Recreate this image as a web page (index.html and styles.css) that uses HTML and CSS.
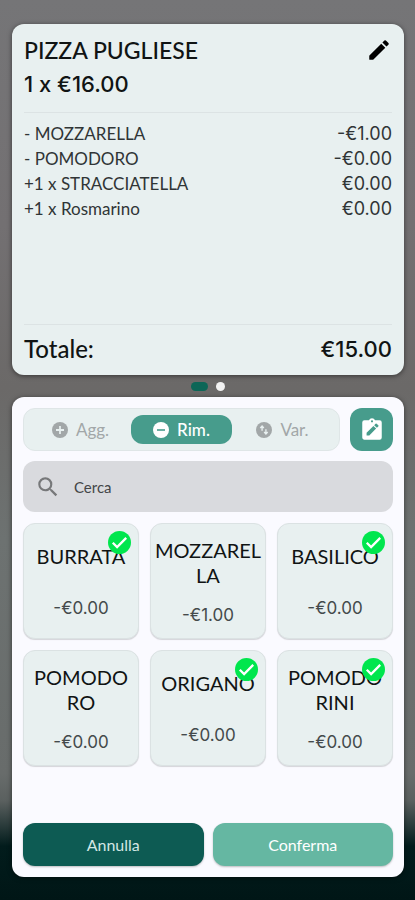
FILE: index.html
```html
<!DOCTYPE html>
<html lang="it">
<head>
<meta charset="utf-8">
<meta name="viewport" content="width=device-width, initial-scale=1">
<title>Pizza Pugliese</title>
<link rel="stylesheet" href="styles.css">
</head>
<body>
<svg class="defs" aria-hidden="true">
  <symbol id="check" viewBox="0 0 24 24"><circle cx="12" cy="12" r="12" fill="#00e64d"/><path d="M5 12.200l4.500 4.500L19 7.200" fill="none" stroke="#fff" stroke-width="2.4"/></symbol>
</svg>
<main class="screen">
  <section class="card order">
    <header class="order-head">
      <div>
        <h1 class="title">PIZZA PUGLIESE</h1>
        <p class="title amount">1 x €16.00</p>
      </div>
      <button class="edit" aria-label="Modifica"><svg viewBox="0 0 24 24" width="26" height="26"><path d="M3 17.46v3.04c0 .28.22.5.5.5h3.04c.13 0 .26-.05.35-.15L17.81 9.94l-3.75-3.75L3.15 17.1c-.1.1-.15.22-.15.36zM20.71 7.04a1 1 0 0 0 0-1.41l-2.34-2.34a1 1 0 0 0-1.41 0l-1.83 1.83 3.75 3.75 1.83-1.83z"/></svg></button>
    </header>
    <ul class="lines">
      <li><span>- MOZZARELLA</span><span class="num">-€1.00</span></li>
      <li><span>- POMODORO</span><span class="num">-€0.00</span></li>
      <li><span>+1 x STRACCIATELLA</span><span class="num">€0.00</span></li>
      <li><span>+1 x Rosmarino</span><span class="num">€0.00</span></li>
    </ul>
    <footer class="total"><span>Totale:</span><span class="amount">€15.00</span></footer>
  </section>
  <div class="dots"><span class="dot active"></span><span class="dot"></span></div>
  <section class="card picker">
    <div class="toolbar">
      <div class="tabs">
        <button class="tab"><svg viewBox="0 0 20 20" width="16" height="16"><circle cx="10" cy="10" r="10" fill="currentColor"/><path d="M10 5v10M5 10h10" stroke="#e8f0f0" stroke-width="2.2"/></svg>Agg.</button>
        <button class="tab selected"><svg viewBox="0 0 20 20" width="16" height="16"><circle cx="10" cy="10" r="10" fill="currentColor"/><path d="M5 10h10" stroke="#479c8c" stroke-width="2"/></svg>Rim.</button>
        <button class="tab"><svg viewBox="0 0 20 20" width="16" height="16"><circle cx="10" cy="10" r="10" fill="currentColor"/><path d="M7.6 11V5M5.4 7.4l2.2-2.4 2.2 2.4M12.4 9v6M10.2 12.6l2.2 2.4 2.2-2.4" fill="none" stroke="#e8f0f0" stroke-width="1.7"/></svg>Var.</button>
      </div>
      <button class="note" aria-label="Nota"><svg viewBox="0 0 24 24" width="26" height="26"><path fill="#fff" d="M19 3h-4.2a3 3 0 0 0-5.6 0H5a2 2 0 0 0-2 2v14c0 1.100.9 2 2 2h14a2 2 0 0 0 2-2V5a2 2 0 0 0-2-2z"/><circle cx="12" cy="4" r="1" fill="#479c8c"/><path fill="#479c8c" d="M7 17v-2.500l6.300-6.300 2.500 2.500L9.500 17zM16.500 10l-2.500-2.500 1.300-1.300a.7.7 0 0 1 1 0l1.500 1.500a.7.7 0 0 1 0 1z"/></svg></button>
    </div>
    <label class="search">
      <svg viewBox="0 0 24 24" width="26" height="26"><path fill="#77787a" d="M15.500 14h-.79l-.28-.27A6.470 6.470 0 0 0 16 9.500 6.500 6.500 0 1 0 9.500 16c1.610 0 3.090-.59 4.230-1.570l.27.28v.79l5 4.990L20.490 19l-4.990-5zm-6 0C7.010 14 5 11.990 5 9.500S7.010 5 9.500 5 14 7.010 14 9.500 11.990 14 9.500 14z"/></svg>
      <input type="text" placeholder="Cerca" aria-label="Cerca">
    </label>
    <div class="grid">
      <button class="tile"><span class="name">BURRATA</span><span class="price">-€0.00</span><svg class="check"><use href="#check"/></svg></button>
      <button class="tile"><span class="name">MOZZAREL<br>LA</span><span class="price">-€1.00</span></button>
      <button class="tile"><span class="name">BASILICO</span><span class="price">-€0.00</span><svg class="check"><use href="#check"/></svg></button>
      <button class="tile"><span class="name">POMODO<br>RO</span><span class="price">-€0.00</span></button>
      <button class="tile"><span class="name">ORIGANO</span><span class="price">-€0.00</span><svg class="check"><use href="#check"/></svg></button>
      <button class="tile"><span class="name">POMODO<br>RINI</span><span class="price">-€0.00</span><svg class="check"><use href="#check"/></svg></button>
    </div>
    <div class="actions">
      <button class="action cancel">Annulla</button>
      <button class="action confirm">Conferma</button>
    </div>
  </section>
</main>
</body>
</html>
```
FILE: styles.css
```css
* { box-sizing: border-box; }
body {
  margin: 0;
  min-height: 100vh;
  font-family: Lato, "Liberation Sans", sans-serif;
  color: #101414;
  background: linear-gradient(#757577 0%, #737072 25%, #6b6968 43%, #6d7271 60%, #686c6b 86%, #5a605f 89%, #021c1c 94%, #001616 100%);
}
button {
  margin: 0;
  padding: 0;
  border: 0;
  font: inherit;
  color: inherit;
  background: none;
  cursor: pointer;
}
svg { display: block; }
.defs { position: absolute; width: 0; height: 0; }
.screen {
  display: flex;
  flex-direction: column;
  min-height: 100vh;
  padding: 24px 11px 23px 12px;
}
.card {
  padding: 11px 12px;
  border-radius: 12px;
  box-shadow: 0 1px 5px rgba(0, 0, 0, .5);
}
.order {
  display: flex;
  flex-direction: column;
  min-height: 351px;
  padding-bottom: 0;
  background: #e8f0f0;
}
.order-head {
  display: flex;
  justify-content: space-between;
  align-items: flex-start;
  height: 78px;
  border-bottom: 1px solid #dce3e4;
}
.title {
  margin: 0 0 4px;
  font-size: 23px;
  line-height: 30px;
  font-weight: 500;
}
.amount { font-family: Inter, sans-serif; font-size: 22px; }
.edit { margin-top: 2px; }
.lines {
  flex: 1;
  margin: 0;
  padding: 8px 0 0;
  list-style: none;
  font-size: 17px;
  line-height: 25px;
  color: #303536;
}
.lines li { display: flex; justify-content: space-between; }
.num { font-family: Inter, sans-serif; font-size: 18px; }
.total {
  display: flex;
  justify-content: space-between;
  align-items: center;
  height: 51px;
  padding-bottom: 3px;
  border-top: 1px solid #dce3e4;
  font-size: 24px;
  font-weight: 500;
}
.dots {
  display: flex;
  justify-content: center;
  align-items: center;
  gap: 8px;
  height: 22px;
}
.dot { width: 9px; height: 9px; border-radius: 5px; background: #f2f2f2; }
.dot.active { width: 17px; background: #0c6657; }
.picker {
  flex: 1;
  display: flex;
  flex-direction: column;
  padding: 11px;
  background: #fafaff;
}
.toolbar { display: flex; gap: 10px; }
.tabs {
  flex: 1;
  display: grid;
  grid-template-columns: repeat(3, 1fr);
  padding: 6px;
  border: 1px solid #dfe6e7;
  border-radius: 12px;
  background: #e8f0f0;
}
.tab {
  display: flex;
  justify-content: center;
  align-items: center;
  gap: 8px;
  border-radius: 12px;
  font-size: 17px;
  color: #a2a7a8;
}
.selected { color: #fff; background: #479c8c; font-weight: 500; }
.note {
  display: grid;
  place-items: center;
  width: 43px;
  height: 43px;
  border-radius: 12px;
  background: #479c8c;
}
.search {
  display: flex;
  align-items: center;
  gap: 13px;
  height: 51px;
  margin-top: 10px;
  padding: 0 12px;
  border-radius: 12px;
  background: #d9dade;
}
.search input {
  flex: 1;
  min-width: 0;
  padding: 0;
  border: 0;
  outline: 0;
  font: 15px Lato, sans-serif;
  background: none;
}
.search input::placeholder { color: #444648; opacity: 1; }
.grid {
  display: grid;
  grid-template-columns: repeat(3, 1fr);
  gap: 11px;
  margin-top: 11px;
}
.tile {
  position: relative;
  display: flex;
  flex-direction: column;
  justify-content: center;
  align-items: center;
  height: 116px;
  padding-top: 2px;
  border: 1px solid #dbe2e3;
  border-radius: 12px;
  background: #e8f0f0;
  box-shadow: 0 1px 1px rgba(0, 0, 0, .15);
}
.name { min-height: 37px; font-size: 20px; line-height: 25px; }
.price { margin-top: 15px; font: 17px/24px Inter, sans-serif; color: #444a4b; }
.check { position: absolute; top: 7px; right: 7px; width: 23px; height: 23px; }
.actions {
  display: grid;
  grid-template-columns: 1fr 1fr;
  gap: 9px;
  margin-top: auto;
}
.action {
  height: 43px;
  border-radius: 12px;
  font-size: 16px;
  color: #fff;
  box-shadow: 0 1px 2px rgba(0, 0, 0, .25);
}
.cancel { color: #d3e6e3; background: #0d5b53; }
.confirm { background: #65b7a2; }
```
